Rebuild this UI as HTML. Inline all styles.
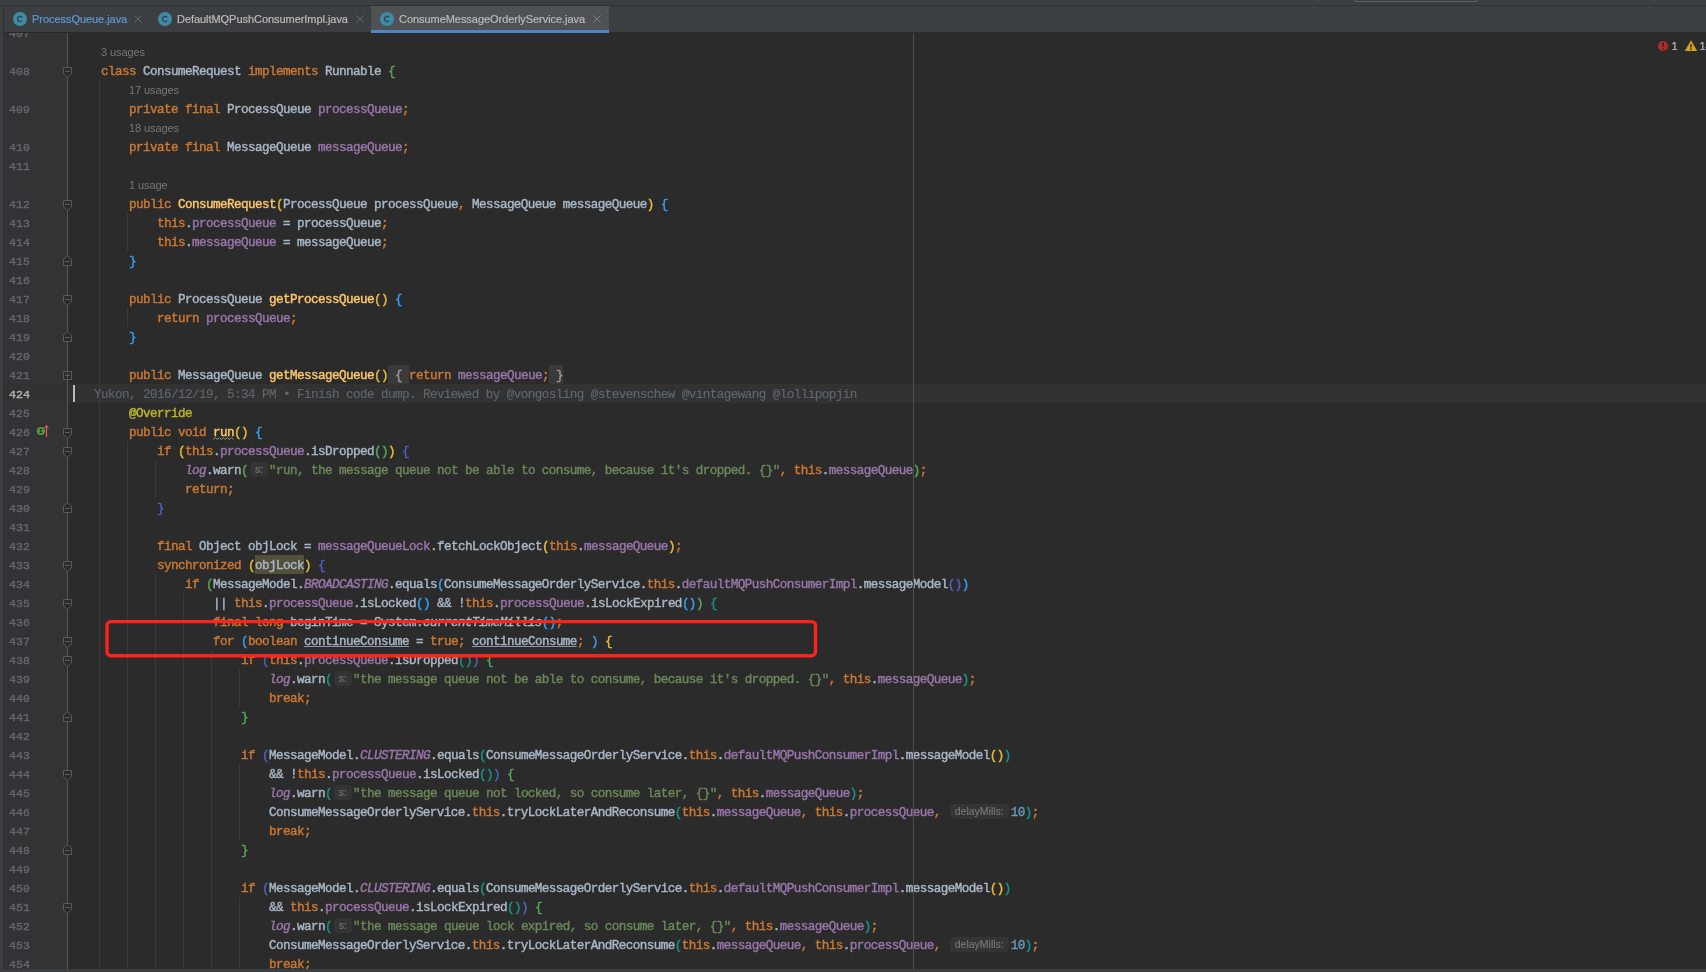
<!DOCTYPE html>
<html><head><meta charset="utf-8"><title>ConsumeMessageOrderlyService.java</title>
<style>
*{margin:0;padding:0;box-sizing:border-box}
html,body{width:1706px;height:972px;overflow:hidden;background:#2b2b2b}
body{position:relative;font-family:"Liberation Mono",monospace;color:#a9b7c6}
#top{position:absolute;left:0;top:0;width:1706px;height:6px;background:#3c3f41;border-bottom:1px solid #2f3133}
#tabs{position:absolute;left:0;top:6px;width:1706px;height:27px;background:#3c3f41;border-bottom:1px solid #2a2a2a;font-family:"Liberation Sans",sans-serif;font-size:11px;letter-spacing:-0.05px;color:#bbbbbb;-webkit-text-stroke:0.2px;will-change:transform}
#tabs .t{position:absolute;top:0;height:27px;line-height:27px;white-space:pre}
#tabs .sel{background:#4e5254;border-bottom:3px solid #4a88c7}
#left{position:absolute;left:0;top:32px;width:3px;height:940px;background:#3c3f41;border-right:0}
#left2{position:absolute;left:3px;top:6px;width:1px;height:963px;background:#303234}
#left0{position:absolute;left:0;top:6px;width:3px;height:30px;background:#3c3f41}
#pill{position:absolute;left:1354px;top:-5px;width:124px;height:7px;border:1px solid #606365;border-radius:3px}
.tick{position:absolute;top:0;width:1px;height:1px;background:#5a5d5f}
#bottom{position:absolute;left:0;top:969px;width:1706px;height:3px;background:#3c3f41}
#gutter{position:absolute;left:3px;top:32px;width:65px;height:937px;background:#313335}
#gline{position:absolute;left:67px;top:32px;width:1px;height:937px;background:#555555}
#margin{position:absolute;left:913px;top:32px;width:1px;height:937px;background:#4d4d4d}
#ed{position:absolute;left:0;top:32px;width:1706px;height:937px;overflow:hidden}
#ed>div{position:absolute;left:0;top:-32px;width:1706px;height:972px;will-change:transform}
.r{position:absolute;left:73px;height:19px;line-height:19px;padding-top:1.5px;font-size:12.6px;letter-spacing:-0.56px;white-space:pre;-webkit-text-stroke:0.42px}
.bl{color:#5f6670;-webkit-text-stroke:0.15px}
.ln{position:absolute;left:9px;width:40px;height:19px;line-height:19px;padding-top:1px;font-size:11.5px;letter-spacing:0.1px;color:#64676a;-webkit-text-stroke:0.4px}
.lnc{color:#b0b0b0;-webkit-text-stroke:0.45px;font-size:11.5px;letter-spacing:0.1px;padding-top:1px}
.us{position:absolute;height:19px;line-height:19px;font-family:"Liberation Sans",sans-serif;font-size:11px;letter-spacing:-0.1px;color:#787878;white-space:pre;padding-top:1px}
.cur{position:absolute;left:4px;width:1702px;height:19px;background:#323232}
.caret{position:absolute;left:73px;width:2px;height:17px;background:#bbbbbb}
.ig{position:absolute;width:1px;background:#393939}
.fdw{position:absolute;left:62px;width:11px;height:19px}
.fd{position:absolute;left:0;top:0}
.k{color:#cc7832}.f{color:#9876aa}.fi{color:#9876aa;font-style:italic}.i{font-style:italic}
.m{color:#ffc66d}.mw{color:#ffc66d}
.zz{position:absolute;left:213px}
.s{color:#6a8759}.a{color:#bbb529}.n{color:#6897bb}
.u{text-decoration:underline;text-decoration-thickness:0.8px;text-underline-offset:1.1px;text-decoration-color:#8c9aae}
.hl{}
.bg{position:absolute;height:19px}
.fold{color:#9a9a9a}
.Y{color:#e8ba36}.G{color:#54a857}.B{color:#359ff4}.P{color:#5060bb}.T{color:#179387}
.ih{display:inline-block;height:19px;vertical-align:top;position:relative;letter-spacing:0}
.ih b{position:absolute;left:2px;right:1px;top:0.5px;height:15px;line-height:15.2px;border-radius:4px;background:#343434;color:#787878;font-family:"Liberation Sans",sans-serif;font-weight:normal;font-size:10.5px;text-align:center;-webkit-text-stroke:0.15px}
.i9 b{right:2px}
.i3{width:21px}.i9{width:63px}
#box{position:absolute;left:100px;top:615px;width:724px;height:48px}
.ov{position:absolute;left:34px}
#err{will-change:transform;position:absolute;left:1650px;top:36px;width:80px;height:20px;font-family:"Liberation Sans",sans-serif;font-size:11px;color:#bbbbbb;white-space:pre;-webkit-text-stroke:0.2px}
#err span{position:absolute;top:0;line-height:20px}
</style></head><body>
<div id="gutter"></div><div class="cur" style="top:384px"></div><div id="gline"></div>
<div id="ed"><div>
<div class="ig" style="left:99px;top:80px;height:889px"></div>
<div class="ig" style="left:127px;top:213px;height:38px"></div>
<div class="ig" style="left:127px;top:308px;height:19px"></div>
<div class="ig" style="left:127px;top:441px;height:528px"></div>
<div class="ig" style="left:155px;top:460px;height:38px"></div>
<div class="ig" style="left:155px;top:574px;height:395px"></div>
<div class="ig" style="left:183px;top:593px;height:376px"></div>
<div class="ig" style="left:211px;top:650px;height:319px"></div>
<div class="ig" style="left:239px;top:669px;height:38px"></div>
<div class="ig" style="left:239px;top:764px;height:76px"></div>
<div class="ig" style="left:239px;top:897px;height:72px"></div>
<div class="ln" style="top:23px">407</div>
<div class="us" style="top:42px;left:101px">3 usages</div>
<div class="ln" style="top:61px">408</div>
<div class="fdw" style="top:61px"><svg class="fd" width="11" height="19" viewBox="0 0 11 19"><path d="M1.5 6.5h8v6.2l-4 3.8-4-3.8z" fill="#2b2b2b" stroke="#5a5a5a"/><path d="M3 10.5h5" stroke="#5a5a5a"/></svg></div>
<div class="r" style="top:61px">    <span class="k">class</span> ConsumeRequest <span class="k">implements</span> Runnable <span class="G">{</span></div>
<div class="us" style="top:80px;left:129px">17 usages</div>
<div class="ln" style="top:99px">409</div>
<div class="r" style="top:99px">        <span class="k">private final</span> ProcessQueue <span class="f">processQueue</span><span class="k">;</span></div>
<div class="us" style="top:118px;left:129px">18 usages</div>
<div class="ln" style="top:137px">410</div>
<div class="r" style="top:137px">        <span class="k">private final</span> MessageQueue <span class="f">messageQueue</span><span class="k">;</span></div>
<div class="ln" style="top:156px">411</div>
<div class="us" style="top:175px;left:129px">1 usage</div>
<div class="ln" style="top:194px">412</div>
<div class="fdw" style="top:194px"><svg class="fd" width="11" height="19" viewBox="0 0 11 19"><path d="M1.5 6.5h8v6.2l-4 3.8-4-3.8z" fill="#2b2b2b" stroke="#5a5a5a"/><path d="M3 10.5h5" stroke="#5a5a5a"/></svg></div>
<div class="r" style="top:194px">        <span class="k">public</span> <span class="m">ConsumeRequest</span><span class="Y">(</span>ProcessQueue processQueue<span class="k">,</span> MessageQueue messageQueue<span class="Y">)</span> <span class="B">{</span></div>
<div class="ln" style="top:213px">413</div>
<div class="r" style="top:213px">            <span class="k">this</span>.<span class="f">processQueue</span> = processQueue<span class="k">;</span></div>
<div class="ln" style="top:232px">414</div>
<div class="r" style="top:232px">            <span class="k">this</span>.<span class="f">messageQueue</span> = messageQueue<span class="k">;</span></div>
<div class="ln" style="top:251px">415</div>
<div class="fdw" style="top:251px"><svg class="fd" width="11" height="19" viewBox="0 0 11 19"><path d="M1.5 14.5h8v-6.3l-4-3.6-4 3.6z" fill="#2b2b2b" stroke="#5a5a5a"/><path d="M3 10.5h5" stroke="#5a5a5a"/></svg></div>
<div class="r" style="top:251px">        <span class="B">}</span></div>
<div class="ln" style="top:270px">416</div>
<div class="ln" style="top:289px">417</div>
<div class="fdw" style="top:289px"><svg class="fd" width="11" height="19" viewBox="0 0 11 19"><path d="M1.5 6.5h8v6.2l-4 3.8-4-3.8z" fill="#2b2b2b" stroke="#5a5a5a"/><path d="M3 10.5h5" stroke="#5a5a5a"/></svg></div>
<div class="r" style="top:289px">        <span class="k">public</span> ProcessQueue <span class="m">getProcessQueue</span><span class="Y">()</span> <span class="B">{</span></div>
<div class="ln" style="top:308px">418</div>
<div class="r" style="top:308px">            <span class="k">return</span> <span class="f">processQueue</span><span class="k">;</span></div>
<div class="ln" style="top:327px">419</div>
<div class="fdw" style="top:327px"><svg class="fd" width="11" height="19" viewBox="0 0 11 19"><path d="M1.5 14.5h8v-6.3l-4-3.6-4 3.6z" fill="#2b2b2b" stroke="#5a5a5a"/><path d="M3 10.5h5" stroke="#5a5a5a"/></svg></div>
<div class="r" style="top:327px">        <span class="B">}</span></div>
<div class="ln" style="top:346px">420</div>
<div class="ln" style="top:365px">421</div>
<div class="fdw" style="top:365px"><svg class="fd" width="11" height="19" viewBox="0 0 11 19"><path d="M1.5 6.5h8v8h-8z" fill="#2b2b2b" stroke="#5a5a5a"/><path d="M3 10.5h5M5.5 8v5" stroke="#5a5a5a"/></svg></div>
<div class="bg" style="left:388px;top:365px;width:21px;background:#3a3a3a"></div><div class="bg" style="left:549px;top:365px;width:14px;background:#3a3a3a"></div>
<div class="r" style="top:365px">        <span class="k">public</span> MessageQueue <span class="m">getMessageQueue</span><span class="Y">()</span><span class="fold"> { </span><span class="k">return</span> <span class="f">messageQueue</span><span class="k">;</span><span class="fold"> }</span></div>
<div class="caret" style="top:385px"></div>
<div class="ln lnc" style="top:384px">424</div>
<div class="r bl" style="top:384px;left:94px">Yukon, 2016/12/19, 5:34 PM • Finish code dump. Reviewed by @vongosling @stevenschew @vintagewang @lollipopjin</div>
<div class="ln" style="top:403px">425</div>
<div class="r" style="top:403px">        <span class="a">@Override</span></div>
<div class="ln" style="top:422px">426</div>
<svg class="ov" style="top:422px" width="18" height="19" viewBox="0 0 18 19"><circle cx="6.9" cy="9" r="4.1" fill="#549a3e"/><path d="M5.5 7.4h2.8M5.5 10.6h2.8M6.9 7.4v3.2" stroke="#1d3016" stroke-width="1" fill="none"/><path d="M12.5 15V4.5" stroke="#db5860" stroke-width="1.3"/><path d="M9.9 5.7L12.5 2.7L15.1 5.7z" fill="#db5860"/></svg>
<svg class="zz" style="top:436px" width="22" height="5" viewBox="0 0 22 5"><path d="M0.4 3.6l2-2.1 2 2.1 2-2.1 2 2.1 2-2.1 2 2.1 2-2.1 2 2.1 2-2.1 2 2.1" fill="none" stroke="#97997b" stroke-width="1"/></svg>
<div class="fdw" style="top:422px"><svg class="fd" width="11" height="19" viewBox="0 0 11 19"><path d="M1.5 6.5h8v6.2l-4 3.8-4-3.8z" fill="#2b2b2b" stroke="#5a5a5a"/><path d="M3 10.5h5" stroke="#5a5a5a"/></svg></div>
<div class="r" style="top:422px">        <span class="k">public void</span> <span class="mw">run</span><span class="Y">()</span> <span class="B">{</span></div>
<div class="ln" style="top:441px">427</div>
<div class="fdw" style="top:441px"><svg class="fd" width="11" height="19" viewBox="0 0 11 19"><path d="M1.5 6.5h8v6.2l-4 3.8-4-3.8z" fill="#2b2b2b" stroke="#5a5a5a"/><path d="M3 10.5h5" stroke="#5a5a5a"/></svg></div>
<div class="r" style="top:441px">            <span class="k">if</span> <span class="Y">(</span><span class="k">this</span>.<span class="f">processQueue</span>.isDropped<span class="G">()</span><span class="Y">)</span> <span class="P">{</span></div>
<div class="ln" style="top:460px">428</div>
<div class="r" style="top:460px">                <span class="fi">log</span>.warn<span class="G">(</span><span class="ih i3"><b>s:</b></span><span class="s">"run, the message queue not be able to consume, because it's dropped. {}"</span><span class="k">,</span> <span class="k">this</span>.<span class="f">messageQueue</span><span class="G">)</span><span class="k">;</span></div>
<div class="ln" style="top:479px">429</div>
<div class="r" style="top:479px">                <span class="k">return;</span></div>
<div class="ln" style="top:498px">430</div>
<div class="fdw" style="top:498px"><svg class="fd" width="11" height="19" viewBox="0 0 11 19"><path d="M1.5 14.5h8v-6.3l-4-3.6-4 3.6z" fill="#2b2b2b" stroke="#5a5a5a"/><path d="M3 10.5h5" stroke="#5a5a5a"/></svg></div>
<div class="r" style="top:498px">            <span class="P">}</span></div>
<div class="ln" style="top:517px">431</div>
<div class="ln" style="top:536px">432</div>
<div class="r" style="top:536px">            <span class="k">final</span> Object objLock = <span class="f">messageQueueLock</span>.fetchLockObject<span class="Y">(</span><span class="k">this</span>.<span class="f">messageQueue</span><span class="Y">)</span><span class="k">;</span></div>
<div class="ln" style="top:555px">433</div>
<div class="fdw" style="top:555px"><svg class="fd" width="11" height="19" viewBox="0 0 11 19"><path d="M1.5 6.5h8v6.2l-4 3.8-4-3.8z" fill="#2b2b2b" stroke="#5a5a5a"/><path d="M3 10.5h5" stroke="#5a5a5a"/></svg></div>
<div class="bg" style="left:255px;top:555px;width:49px;background:#52503a"></div>
<div class="r" style="top:555px">            <span class="k">synchronized</span> <span class="Y">(</span><span class="hl">objLock</span><span class="Y">)</span> <span class="P">{</span></div>
<div class="ln" style="top:574px">434</div>
<div class="r" style="top:574px">                <span class="k">if</span> <span class="G">(</span>MessageModel.<span class="fi">BROADCASTING</span>.equals<span class="B">(</span>ConsumeMessageOrderlyService.<span class="k">this</span>.<span class="f">defaultMQPushConsumerImpl</span>.messageModel<span class="P">()</span><span class="B">)</span></div>
<div class="ln" style="top:593px">435</div>
<div class="fdw" style="top:593px"><svg class="fd" width="11" height="19" viewBox="0 0 11 19"><path d="M1.5 6.5h8v6.2l-4 3.8-4-3.8z" fill="#2b2b2b" stroke="#5a5a5a"/><path d="M3 10.5h5" stroke="#5a5a5a"/></svg></div>
<div class="r" style="top:593px">                    || <span class="k">this</span>.<span class="f">processQueue</span>.isLocked<span class="B">()</span> &amp;&amp; !<span class="k">this</span>.<span class="f">processQueue</span>.isLockExpired<span class="B">()</span><span class="G">)</span> <span class="T">{</span></div>
<div class="ln" style="top:612px">436</div>
<div class="r" style="top:612px">                    <span class="k">final long</span> beginTime = System.<span class="i">currentTimeMillis</span><span class="B">()</span><span class="k">;</span></div>
<div class="ln" style="top:631px">437</div>
<div class="fdw" style="top:631px"><svg class="fd" width="11" height="19" viewBox="0 0 11 19"><path d="M1.5 6.5h8v6.2l-4 3.8-4-3.8z" fill="#2b2b2b" stroke="#5a5a5a"/><path d="M3 10.5h5" stroke="#5a5a5a"/></svg></div>
<div class="r" style="top:631px">                    <span class="k">for</span> <span class="B">(</span><span class="k">boolean</span> <span class="u">continueConsume</span> = <span class="k">true;</span> <span class="u">continueConsume</span><span class="k">;</span> <span class="B">)</span> <span class="Y">{</span></div>
<div class="ln" style="top:650px">438</div>
<div class="fdw" style="top:650px"><svg class="fd" width="11" height="19" viewBox="0 0 11 19"><path d="M1.5 6.5h8v6.2l-4 3.8-4-3.8z" fill="#2b2b2b" stroke="#5a5a5a"/><path d="M3 10.5h5" stroke="#5a5a5a"/></svg></div>
<div class="r" style="top:650px">                        <span class="k">if</span> <span class="P">(</span><span class="k">this</span>.<span class="f">processQueue</span>.isDropped<span class="T">()</span><span class="P">)</span> <span class="G">{</span></div>
<div class="ln" style="top:669px">439</div>
<div class="r" style="top:669px">                            <span class="fi">log</span>.warn<span class="T">(</span><span class="ih i3"><b>s:</b></span><span class="s">"the message queue not be able to consume, because it's dropped. {}"</span><span class="k">,</span> <span class="k">this</span>.<span class="f">messageQueue</span><span class="T">)</span><span class="k">;</span></div>
<div class="ln" style="top:688px">440</div>
<div class="r" style="top:688px">                            <span class="k">break;</span></div>
<div class="ln" style="top:707px">441</div>
<div class="fdw" style="top:707px"><svg class="fd" width="11" height="19" viewBox="0 0 11 19"><path d="M1.5 14.5h8v-6.3l-4-3.6-4 3.6z" fill="#2b2b2b" stroke="#5a5a5a"/><path d="M3 10.5h5" stroke="#5a5a5a"/></svg></div>
<div class="r" style="top:707px">                        <span class="G">}</span></div>
<div class="ln" style="top:726px">442</div>
<div class="ln" style="top:745px">443</div>
<div class="r" style="top:745px">                        <span class="k">if</span> <span class="P">(</span>MessageModel.<span class="fi">CLUSTERING</span>.equals<span class="T">(</span>ConsumeMessageOrderlyService.<span class="k">this</span>.<span class="f">defaultMQPushConsumerImpl</span>.messageModel<span class="Y">()</span><span class="T">)</span></div>
<div class="ln" style="top:764px">444</div>
<div class="fdw" style="top:764px"><svg class="fd" width="11" height="19" viewBox="0 0 11 19"><path d="M1.5 6.5h8v6.2l-4 3.8-4-3.8z" fill="#2b2b2b" stroke="#5a5a5a"/><path d="M3 10.5h5" stroke="#5a5a5a"/></svg></div>
<div class="r" style="top:764px">                            &amp;&amp; !<span class="k">this</span>.<span class="f">processQueue</span>.isLocked<span class="T">()</span><span class="P">)</span> <span class="G">{</span></div>
<div class="ln" style="top:783px">445</div>
<div class="r" style="top:783px">                            <span class="fi">log</span>.warn<span class="T">(</span><span class="ih i3"><b>s:</b></span><span class="s">"the message queue not locked, so consume later, {}"</span><span class="k">,</span> <span class="k">this</span>.<span class="f">messageQueue</span><span class="T">)</span><span class="k">;</span></div>
<div class="ln" style="top:802px">446</div>
<div class="r" style="top:802px">                            ConsumeMessageOrderlyService.<span class="k">this</span>.tryLockLaterAndReconsume<span class="T">(</span><span class="k">this</span>.<span class="f">messageQueue</span><span class="k">,</span> <span class="k">this</span>.<span class="f">processQueue</span><span class="k">,</span> <span class="ih i9"><b>delayMills:</b></span><span class="n">10</span><span class="T">)</span><span class="k">;</span></div>
<div class="ln" style="top:821px">447</div>
<div class="r" style="top:821px">                            <span class="k">break;</span></div>
<div class="ln" style="top:840px">448</div>
<div class="fdw" style="top:840px"><svg class="fd" width="11" height="19" viewBox="0 0 11 19"><path d="M1.5 14.5h8v-6.3l-4-3.6-4 3.6z" fill="#2b2b2b" stroke="#5a5a5a"/><path d="M3 10.5h5" stroke="#5a5a5a"/></svg></div>
<div class="r" style="top:840px">                        <span class="G">}</span></div>
<div class="ln" style="top:859px">449</div>
<div class="ln" style="top:878px">450</div>
<div class="r" style="top:878px">                        <span class="k">if</span> <span class="P">(</span>MessageModel.<span class="fi">CLUSTERING</span>.equals<span class="T">(</span>ConsumeMessageOrderlyService.<span class="k">this</span>.<span class="f">defaultMQPushConsumerImpl</span>.messageModel<span class="Y">()</span><span class="T">)</span></div>
<div class="ln" style="top:897px">451</div>
<div class="fdw" style="top:897px"><svg class="fd" width="11" height="19" viewBox="0 0 11 19"><path d="M1.5 6.5h8v6.2l-4 3.8-4-3.8z" fill="#2b2b2b" stroke="#5a5a5a"/><path d="M3 10.5h5" stroke="#5a5a5a"/></svg></div>
<div class="r" style="top:897px">                            &amp;&amp; <span class="k">this</span>.<span class="f">processQueue</span>.isLockExpired<span class="T">()</span><span class="P">)</span> <span class="G">{</span></div>
<div class="ln" style="top:916px">452</div>
<div class="r" style="top:916px">                            <span class="fi">log</span>.warn<span class="T">(</span><span class="ih i3"><b>s:</b></span><span class="s">"the message queue lock expired, so consume later, {}"</span><span class="k">,</span> <span class="k">this</span>.<span class="f">messageQueue</span><span class="T">)</span><span class="k">;</span></div>
<div class="ln" style="top:935px">453</div>
<div class="r" style="top:935px">                            ConsumeMessageOrderlyService.<span class="k">this</span>.tryLockLaterAndReconsume<span class="T">(</span><span class="k">this</span>.<span class="f">messageQueue</span><span class="k">,</span> <span class="k">this</span>.<span class="f">processQueue</span><span class="k">,</span> <span class="ih i9"><b>delayMills:</b></span><span class="n">10</span><span class="T">)</span><span class="k">;</span></div>
<div class="ln" style="top:954px">454</div>
<div class="r" style="top:954px">                            <span class="k">break;</span></div>
</div></div>
<div id="margin"></div>
<svg id="box" viewBox="0 0 724 48"><rect x="7" y="6.65" width="708.5" height="34.1" rx="3.9" fill="none" stroke="#fd231d" stroke-width="3.4"/></svg>
<div id="top"></div>
<div id="tabs"><div class="t" style="left:4px;width:145px"><svg style="position:absolute;left:8px;top:5px" width="16" height="16" viewBox="0 0 16 16"><circle cx="8" cy="8" r="7" fill="#3f8ba4"/><path d="M10.1 9.6A2.55 2.55 0 1 1 10.1 6.4" fill="none" stroke="#274452" stroke-width="1.25"/></svg><span style="position:absolute;left:28px;color:#5d9bd6">ProcessQueue.java</span><svg style="position:absolute;left:130px;top:9px" width="8" height="8" viewBox="0 0 8 8"><path d="M0.3 0.3L7.7 7.7M7.7 0.3L0.3 7.7" stroke="#63686b" stroke-width="1" fill="none"/></svg></div><div class="t" style="left:149px;width:222px"><svg style="position:absolute;left:8px;top:5px" width="16" height="16" viewBox="0 0 16 16"><circle cx="8" cy="8" r="7" fill="#3f8ba4"/><path d="M10.1 9.6A2.55 2.55 0 1 1 10.1 6.4" fill="none" stroke="#274452" stroke-width="1.25"/></svg><span style="position:absolute;left:28px;color:#bbbbbb">DefaultMQPushConsumerImpl.java</span><svg style="position:absolute;left:207px;top:9px" width="8" height="8" viewBox="0 0 8 8"><path d="M0.3 0.3L7.7 7.7M7.7 0.3L0.3 7.7" stroke="#63686b" stroke-width="1" fill="none"/></svg></div><div class="t sel" style="left:371px;width:238px"><svg style="position:absolute;left:8px;top:5px" width="16" height="16" viewBox="0 0 16 16"><circle cx="8" cy="8" r="7" fill="#3f8ba4"/><path d="M10.1 9.6A2.55 2.55 0 1 1 10.1 6.4" fill="none" stroke="#274452" stroke-width="1.25"/></svg><span style="position:absolute;left:28px;color:#bbbbbb">ConsumeMessageOrderlyService.java</span><svg style="position:absolute;left:222px;top:9px" width="8" height="8" viewBox="0 0 8 8"><path d="M0.3 0.3L7.7 7.7M7.7 0.3L0.3 7.7" stroke="#7b8083" stroke-width="1" fill="none"/></svg></div></div>
<div id="left"></div><div id="left0"></div><div id="left2"></div><div id="pill"></div><div class="tick" style="left:1318px"></div><div class="tick" style="left:1654px"></div><div id="bottom"></div>
<div id="err"><svg style="position:absolute;left:0;top:0" width="56" height="20" viewBox="0 0 56 20"><circle cx="13" cy="10" r="5.1" fill="#ad2c2c"/><path d="M13 6.6v4.2M13 12.2v1.6" stroke="#2b2b2b" stroke-width="1.6" fill="none"/><path d="M41 4.2L47.2 14.9H34.8z" fill="#d6a31d"/><path d="M41 8.2v3.2M41 12.4v1.5" stroke="#1d2233" stroke-width="1.5" fill="none"/></svg><span style="left:21.5px">1</span><span style="left:49.5px">14</span></div>
</body></html>
